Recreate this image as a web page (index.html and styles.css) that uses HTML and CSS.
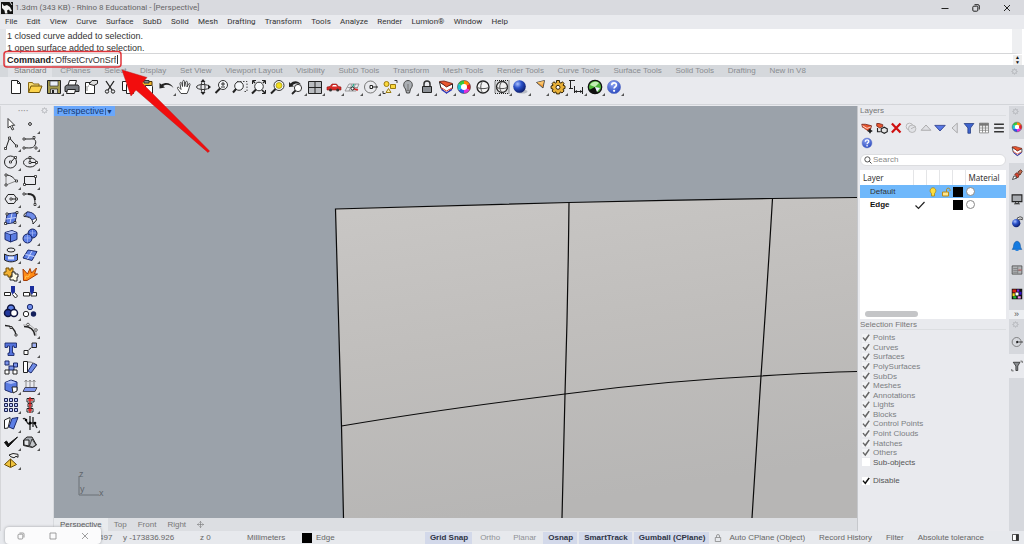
FILE: index.html
```html
<!DOCTYPE html>
<html lang="en">
<head>
<meta charset="utf-8">
<meta name="viewport" content="width=device-width, initial-scale=1">
<title>1.3dm (343 KB) - Rhino 8 Educational - [Perspective]</title>
<link rel="stylesheet" href="styles.css">
</head>
<body>
<svg class="defs" aria-hidden="true">
  <defs>
    <radialGradient id="gBlue" cx=".35" cy=".3" r=".8"><stop offset="0" stop-color="#a9c0ff"/><stop offset=".4" stop-color="#2c52c9"/><stop offset="1" stop-color="#06125a"/></radialGradient>
    <radialGradient id="gHelp" cx=".4" cy=".25" r=".9"><stop offset="0" stop-color="#8fa6f5"/><stop offset="1" stop-color="#1a3bb5"/></radialGradient>
    <linearGradient id="gSrf" x1="0" y1="0" x2=".25" y2="1"><stop offset="0" stop-color="#c9c7c5"/><stop offset=".5" stop-color="#c0bebc"/><stop offset="1" stop-color="#b7b6b5"/></linearGradient>
    <symbol id="gear" viewBox="0 0 8 8"><circle cx="4" cy="4" r="2.3" fill="none" stroke="#b4b6ba" stroke-width="1"/><path d="M4 .4v1M4 6.6v1M.4 4h1M6.6 4h1M1.4 1.4l.8.8M5.8 5.8l.8.8M6.6 1.4l-.8.8M2.2 5.8l-.8.8" stroke="#b4b6ba" stroke-width="1"/></symbol>
    <symbol id="help" viewBox="0 0 16 16"><circle cx="8" cy="8" r="6.6" fill="url(#gHelp)" stroke="#5b6fc4" stroke-width=".6"/><path d="M5.7 6.3c0-3.3 4.8-3.2 4.7-.3 0 1.7-2.3 1.8-2.3 3.5" fill="none" stroke="#fff" stroke-width="1.7"/><circle cx="8.1" cy="11.8" r="1.1" fill="#fff"/></symbol>
    <symbol id="wheel" viewBox="0 0 16 16"><g fill="none" stroke-width="4"><path d="M8 3.5A4.5 4.5 0 0 1 11.9 5.75" stroke="#ff8a00"/><path d="M11.9 5.75A4.5 4.5 0 0 1 11.9 10.25" stroke="#e8202a"/><path d="M11.9 10.25A4.5 4.5 0 0 1 8 12.5" stroke="#e32ee0"/><path d="M8 12.5A4.5 4.5 0 0 1 4.1 10.25" stroke="#2c53f0"/><path d="M4.1 10.25A4.5 4.5 0 0 1 4.1 5.75" stroke="#16c8d6"/><path d="M4.1 5.75A4.5 4.5 0 0 1 8 3.5" stroke="#35cc3a"/></g><circle cx="8" cy="8" r="3" fill="#fff"/><circle cx="8" cy="8" r="6.5" fill="none" stroke="#444" stroke-width=".6"/></symbol>
    <symbol id="layers" viewBox="0 0 16 16"><path d="M1.5 3 8.500 7.500 14.500 5v4.500L8.500 14 3 9.500z" fill="#fff" stroke="#222"/><path d="M1.500 2.500 6 2l8.500 2.500-6 3.500z" fill="#e8562e" stroke="#6b1a10" stroke-width=".8"/><path d="M3 8.500 8.500 12l5.500-3" fill="none" stroke="#d8402e"/><path d="M3.500 10.500 8.500 14l5.500-3.500" fill="none" stroke="#333bc0" stroke-width="1.200"/></symbol>
  </defs>
</svg>

<header class="titlebar">
  <svg class="app-logo" viewBox="0 0 12 12"><rect width="12" height="12" fill="#111"/><path d="M1 1.500 3 4l3-1 3 2 2 4-2 .5-1-2-2 1 .5 3H4l-.5-3L1 6z" fill="#f2f2f2"/><path d="M9 0l2 3" stroke="#ddd"/></svg>
  <h1 class="app-title">1.3dm (343 KB) - Rhino 8 Educational - [Perspective]</h1>
  <div class="window-buttons">
    <button aria-label="Minimize"><svg viewBox="0 0 8 8"><path d="M.5 4.500h7" stroke="#222"/></svg></button>
    <button aria-label="Restore"><svg viewBox="0 0 8 8"><rect x=".8" y="2.200" width="5" height="5" rx="1" fill="none" stroke="#222"/><path d="M2.500.7H6a1.300 1.300 0 0 1 1.300 1.300v3.500" fill="none" stroke="#222"/></svg></button>
    <button aria-label="Close"><svg viewBox="0 0 8 8"><path d="M1 1l6 6M7 1 1 7" stroke="#222"/></svg></button>
  </div>
</header>

<nav class="menubar">
  <button>File</button><button>Edit</button><button>View</button><button>Curve</button><button>Surface</button><button>SubD</button><button>Solid</button><button>Mesh</button><button>Drafting</button><button>Transform</button><button>Tools</button><button>Analyze</button><button>Render</button><button>Lumion®</button><button>Window</button><button>Help</button>
</nav>

<section class="command">
  <div class="history"><p>1 closed curve added to selection.</p><p>1 open surface added to selection.</p></div>
  <div class="prompt"><label for="cmd">Command:</label><input id="cmd" type="text" value="OffsetCrvOnSrf"><span class="spin"><button aria-label="Previous">▲</button><button aria-label="Next">▼</button></span></div>
</section>

<div class="tabs">
  <nav class="tab-list"><button class="on">Standard</button><button>CPlanes</button><button>Select</button><button>Display</button><button>Set View</button><button>Viewport Layout</button><button>Visibility</button><button>SubD Tools</button><button>Transform</button><button>Mesh Tools</button><button>Render Tools</button><button>Curve Tools</button><button>Surface Tools</button><button>Solid Tools</button><button>Drafting</button><button>New in V8</button></nav>
  <svg class="gear"><use href="#gear"/></svg>
</div>

<div class="toolbar">
  <button aria-label="New"><svg viewBox="0 0 16 16"><path d="M3.500 1.500h6l3 3v10h-9z" fill="#fff" stroke="#222"/><path d="M9.500 1.500v3h3" fill="none" stroke="#222"/></svg></button>
  <button aria-label="Open"><svg viewBox="0 0 16 16"><path d="M1.500 13V3.500h4l1 1.500H12v2" fill="#f7dc72" stroke="#8a6912"/><path d="M1.500 13.500 4 7h11l-2.500 6.500z" fill="#fbd24a" stroke="#6e5207"/></svg></button>
  <button class="more" aria-label="Save"><svg viewBox="0 0 16 16"><path d="M1.500 1.500h13v13h-13z" fill="#a39a4d" stroke="#222"/><path d="M4 2h8v5H4z" fill="#e8edf7" stroke="#333" stroke-width=".7"/><path d="M4.500 10h7v4.500h-7z" fill="#ddd" stroke="#222" stroke-width=".7"/><path d="M6 11h2v3H6z" fill="#222"/></svg></button>
  <button aria-label="Print"><svg viewBox="0 0 16 16"><path d="M4 6.500 5.500 1.500h7L11 6.500" fill="#fff" stroke="#222"/><path d="M1 7.500 3 6h11l1 1.500v5H1z" fill="#777b80" stroke="#222"/><path d="M3.500 10.500h8l-1 4h-8z" fill="#f7f7f7" stroke="#222"/></svg></button>
  <button aria-label="Properties"><svg viewBox="0 0 16 16"><path d="M2.500 3.500h9v11h-9z" fill="#fff" stroke="#222"/><path d="M6 5l3-3.500h5.500v3L11 6.500z" fill="#ddd" stroke="#222"/><path d="M4 7v5M5 7h1" stroke="#888"/></svg></button>
  <button aria-label="Cut"><svg viewBox="0 0 16 16"><path d="M4 2l6 9M12 2 6 11" stroke="#222" stroke-width="1.300"/><circle cx="5" cy="12.500" r="1.700" fill="none" stroke="#222"/><circle cx="11" cy="12.500" r="1.700" fill="none" stroke="#222"/></svg></button>
  <button aria-label="Copy"><svg viewBox="0 0 16 16"><path d="M2.500 2.500h6v9h-6z" fill="#fff" stroke="#222"/><path d="M6.500 5.500h5l2 2v7h-7z" fill="#fff" stroke="#222"/></svg></button>
  <button aria-label="Paste"><svg viewBox="0 0 16 16"><path d="M2 2.500h11v11H2z" fill="#f0b429" stroke="#4f3508"/><path d="M5 1.500h5v2.500H5z" fill="#888" stroke="#333"/><path d="M6.500 6.500h6l1 1v7h-7z" fill="#fff" stroke="#222"/></svg></button>
  <button class="more" aria-label="Undo"><svg viewBox="0 0 16 16"><path d="M1.500 4v5.500l5.500-1-1.800-1.400C8 5 12 5.500 15.500 9 13 3.500 7.500 2.800 3.500 5.500z" fill="#222"/></svg></button>
  <button aria-label="Pan"><svg viewBox="0 0 16 16"><path d="M5 14.500 1.500 9.500c-.5-1.500 1-1.800 2-.5L5 10.500 4 4.500c0-1.400 1.500-1.400 1.800 0L6.500 7.500l.2-5c.1-1.500 1.700-1.500 1.800 0l.2 5 1-4.500c.5-1.200 1.800-.8 1.700.4L11 8l1.500-3c.7-1 1.800-.5 1.500.6L12.500 11 11 14.500z" fill="#fff" stroke="#333" stroke-width=".9"/></svg></button>
  <button aria-label="Rotate view"><svg viewBox="0 0 16 16"><g fill="none" stroke="#333"><ellipse cx="8" cy="8" rx="6.500" ry="2.500"/><ellipse cx="8" cy="8" rx="2" ry="6"/></g><path d="M5.500 3 8 0l2.500 3zM5.500 13 8 16l2.500-3zM13 5.500l3 2.500-3 2.500z" fill="#222"/></svg></button>
  <button aria-label="Zoom"><svg viewBox="0 0 16 16"><circle cx="9" cy="6" r="4.500" fill="#f6f8fb" stroke="#333"/><path d="M6 9.500 1.500 14" stroke="#222" stroke-width="2"/><path d="M7 5h4M9 3v4M7 8h4" stroke="#333"/></svg></button>
  <button aria-label="Zoom window"><svg viewBox="0 0 16 16"><path d="M5 2.500h10v10h-4" fill="none" stroke="#444" stroke-dasharray="1.500 1.500"/><circle cx="7" cy="7" r="4.300" fill="#f6f8fb" stroke="#333"/><path d="M4 10 1 13.500" stroke="#222" stroke-width="2"/></svg></button>
  <button aria-label="Zoom extents"><svg viewBox="0 0 16 16"><path d="M1.500 5V1.500H5M11 1.500h3.500V5M14.500 11v3.500H11" fill="none" stroke="#222"/><path d="M2 2l2 2M14 2l-2 2M14 14l-3-3" stroke="#222" stroke-width="1.500"/><circle cx="8" cy="7.500" r="4.300" fill="#f6f8fb" stroke="#333"/><path d="M5 10.500 1 14.500" stroke="#222" stroke-width="2"/></svg></button>
  <button aria-label="Zoom selected"><svg viewBox="0 0 16 16"><circle cx="9" cy="6.500" r="5" fill="#f6f8fb" stroke="#333"/><circle cx="9" cy="6.500" r="3" fill="#f3df1b" stroke="#8a7d10" stroke-width=".6"/><path d="M5.500 10 1 14.500" stroke="#222" stroke-width="2"/></svg></button>
  <button class="more" aria-label="Undo view"><svg viewBox="0 0 16 16"><path d="M1 3v5l5-.5-1.500-1.400C7 4 10 4 13 5.500 10 1.500 5.500 1.500 2.700 4.500z" fill="#222"/><circle cx="10" cy="9" r="3.600" fill="#fff" stroke="#333"/><path d="M7.500 11.500 4 15" stroke="#222" stroke-width="1.800"/></svg></button>
  <button class="more" aria-label="Four viewports"><svg viewBox="0 0 16 16"><path d="M1.500 2.500h13v12h-13z" fill="#b9bcc0" stroke="#222"/><path d="M8 2.500v12M1.500 8.500h13" stroke="#222"/></svg></button>
  <button class="more" aria-label="Car view"><svg viewBox="0 0 16 16"><path d="M1 11V8l3-.5L6 5h4.500l2 2.500 2.500.5v3z" fill="#d92c28" stroke="#8c1512" stroke-width=".6"/><path d="M6 7.500 7 6h3l1 1.500z" fill="#fff"/><circle cx="4.500" cy="11" r="1.500" fill="#333"/><circle cx="11.700" cy="11" r="1.500" fill="#333"/></svg></button>
  <button class="more" aria-label="CPlane"><svg viewBox="0 0 16 16"><path d="M5 5h10l-3 7H1zM3.500 8.500h10.500M8 5l-3 7M11.500 5 8.500 12" fill="none" stroke="#888" stroke-width=".8"/><path d="M9 9.500l5 1.500" stroke="#d22" stroke-width="1.500"/><path d="M8 9l2-4" stroke="#2a8" stroke-width="1.200"/><circle cx="8.500" cy="9.500" r="1.500" fill="#fff" stroke="#222"/></svg></button>
  <button class="more" aria-label="Object snap"><svg viewBox="0 0 16 16"><circle cx="7.500" cy="8" r="6" fill="none" stroke="#777"/><path d="M7 6.500h2.500v3H7z" fill="#fff" stroke="#222"/><path d="M9.500 8H15" stroke="#222"/></svg></button>
  <button class="more" aria-label="Select"><svg viewBox="0 0 16 16"><circle cx="4.500" cy="5" r="2.500" fill="#fbd83c" stroke="#9a7a10"/><path d="M8.500 5.500h5v4h-5z" fill="#fbd83c" stroke="#9a7a10"/><path d="M4 13.500 6.500 9.500 9 13.500z" fill="#fff3b0" stroke="#9a7a10"/><path d="M12.500 1.500h2.500V4M1 12v2.500h2.500" fill="none" stroke="#333"/></svg></button>
  <button class="more" aria-label="Hide"><svg viewBox="0 0 16 16"><path d="M5.500 10C2 6.500 4 1.500 8 1.500S14 6.500 10.500 10L9.500 14h-3z" fill="#aaaeb3" stroke="#444"/><path d="M6 11.500h4M8 5v6" stroke="#777"/></svg></button>
  <button class="more" aria-label="Lock"><svg viewBox="0 0 16 16"><path d="M5 7.500V5a3 3 0 0 1 6 0v2.500" fill="none" stroke="#333" stroke-width="1.500"/><path d="M3.500 7.500h9v6h-9z" fill="#8c9096" stroke="#222"/></svg></button>
  <button class="more" aria-label="Layers"><svg><use href="#layers"/></svg></button>
  <button class="more" aria-label="Color"><svg><use href="#wheel"/></svg></button>
  <button aria-label="Shade"><svg viewBox="0 0 16 16"><circle cx="8" cy="8" r="6" fill="#f4f4f4" stroke="#222" stroke-width="1.300"/><path d="M8 2c-3 3-3 9 0 12M2 8.500c4 1.500 8 1.500 12 0" fill="none" stroke="#555"/></svg></button>
  <button class="more" aria-label="Shade selected"><svg viewBox="0 0 16 16"><path d="M1 1.500h14v13H1z" fill="#d8dadd" stroke="#222" stroke-dasharray="1 1"/><circle cx="8" cy="8" r="5.500" fill="#eee" stroke="#222" stroke-width="1.300"/><path d="M8 2.500c-3 3-3 8 0 11M2.500 8.500c4 1.500 7 1.500 11 0" fill="none" stroke="#555"/></svg></button>
  <button class="more" aria-label="Render"><svg viewBox="0 0 16 16"><ellipse cx="10" cy="12.500" rx="5.500" ry="2" fill="#b8bcc4"/><circle cx="7.500" cy="7.500" r="6.300" fill="url(#gBlue)"/></svg></button>
  <button class="more" aria-label="Spotlight"><svg viewBox="0 0 16 16"><path d="M5.500 3.500 13.500 1.500 12 9z" fill="#ef9b35" stroke="#444" stroke-width=".9"/><path d="M6 3.500 13 2l-1.500 4z" fill="#fbc56b"/></svg></button>
  <button class="more" aria-label="Options"><svg viewBox="0 0 16 16"><path d="M6.500 1.500h3v2l1.500.6 1.500-1.300 1.500 1.800-1 1.600 2 .8v2.500l-2 .6 1 2-2 1.800-1.800-1-.7 2h-3l-.6-2-1.800 1-2-1.800 1-2-2-.6V7l2-.8-1-1.600 1.700-1.800L5.500 4l1-.5z" fill="#e8b13a" stroke="#332405"/><circle cx="8" cy="8.300" r="2" fill="#fff" stroke="#332405"/></svg></button>
  <button class="more" aria-label="Dimension"><svg viewBox="0 0 16 16"><path d="M1 1.500h6M2.500 1.500v8M1 9.500h4M6.500 7v7M14.500 8v7M6.500 12.500h8" fill="none" stroke="#222"/><path d="M9 11l-2.500 1.500L9 14zM12 11l2.500 1.500L12 14z" fill="#222"/></svg></button>
  <button class="more" aria-label="Grasshopper"><svg viewBox="0 0 16 16"><circle cx="8" cy="8" r="6.700" fill="#4fb53a" stroke="#111" stroke-width="1.300"/><path d="M8 8 2 11a7 7 0 0 0 9 3z" fill="#111"/><path d="M3 6c2-4 7-4 9-2L8 8z" fill="#c4eeb4"/><path d="M8 8l5 1-3 4z" fill="#eef"/></svg></button>
  <button class="more" aria-label="Help"><svg><use href="#help"/></svg></button>
</div>

<main class="work">
  <aside class="palette">
    <div class="grip"><span>····</span><svg class="gear"><use href="#gear"/></svg></div>
    <div class="tools">
      <button aria-label="Select"><svg viewBox="0 0 16 16"><path d="M5 2.500v9.500l2.200-2 2 4 1.500-.7-2-4h3z" fill="#fff" stroke="#222" stroke-width=".9"/></svg></button>
      <button class="more" aria-label="Point"><svg viewBox="0 0 16 16"><circle cx="8" cy="8" r="1.400" fill="#fff" stroke="#222"/></svg></button>
      <button class="more" aria-label="Polyline"><svg viewBox="0 0 16 16"><path d="M3 13 6.500 3l7 8" fill="none" stroke="#222"/><path d="M1.500 12.500h2v2h-2zM5.500 2h2v2h-2zM12.500 10h2v2h-2z" fill="#fff" stroke="#222" stroke-width=".8"/></svg></button>
      <button class="more" aria-label="Curve"><svg viewBox="0 0 16 16"><path d="M2 4h6c6-1 7 3 4.500 7C10 14 6 12.500 2 13" fill="none" stroke="#222"/><path d="M1 3h2v2H1zM11 1.500h2v2h-2zM1 12h2v2H1zM13 12h2v2h-2z" fill="#fff" stroke="#222" stroke-width=".8"/></svg></button>
      <button class="more" aria-label="Circle"><svg viewBox="0 0 16 16"><circle cx="7.500" cy="8" r="6" fill="none" stroke="#222"/><path d="M8 8l4-4.500" stroke="#222"/><path d="M6.500 7h2v2h-2zM11.500 2.500h2v2h-2z" fill="#fff" stroke="#222" stroke-width=".8"/></svg></button>
      <button class="more" aria-label="Ellipse"><svg viewBox="0 0 16 16"><ellipse cx="8" cy="8.500" rx="6.500" ry="4.500" fill="none" stroke="#222"/><path d="M8 8V3.500M8 8.500h6" stroke="#222"/><path d="M7 7.500h2v2H7zM7 2.500h2v2H7zM13.500 7.500h2v2h-2z" fill="#fff" stroke="#222" stroke-width=".8"/></svg></button>
      <button class="more" aria-label="Arc"><svg viewBox="0 0 16 16"><path d="M3 3c5 0 8 3 10 6" fill="none" stroke="#222"/><path d="M3 3v10l10-4" fill="none" stroke="#888"/><path d="M2 2h2v2H2zM2 12h2v2H2zM12.500 8h2v2h-2z" fill="#fff" stroke="#222" stroke-width=".8"/></svg></button>
      <button class="more" aria-label="Rectangle"><svg viewBox="0 0 16 16"><path d="M2.500 4.500h11v8h-11z" fill="none" stroke="#222"/><path d="M1.500 11.500h2v2h-2zM12.500 3.500h2v2h-2z" fill="#fff" stroke="#222" stroke-width=".8"/></svg></button>
      <button class="more" aria-label="Polygon"><svg viewBox="0 0 16 16"><path d="M5 3.500h6L14 8l-3 4.500H5L2 8z" fill="none" stroke="#222"/><path d="M8 8h5" stroke="#222"/><path d="M7 7h2v2H7zM12.500 7h2v2h-2z" fill="#fff" stroke="#222" stroke-width=".8"/></svg></button>
      <button class="more" aria-label="Fillet"><svg viewBox="0 0 16 16"><path d="M2 3h5c5 0 6 3 6 11" fill="none" stroke="#222"/><path d="M6 3c5 0 7 2 7 6" fill="none" stroke="#222" stroke-width="2"/><path d="M1 2h2v2H1zM12 12.500h2v2h-2z" fill="#fff" stroke="#222" stroke-width=".8"/></svg></button>
      <button class="more" aria-label="Corner surface"><svg viewBox="0 0 16 16"><path d="M4 4l10-1.500-2 10L2.500 14z" fill="#5d7de0" stroke="#1c2a6b"/><path d="M9 3.500 7 13M3 9l10-1.500" stroke="#cbd6ff"/><path d="M3 3h2v2H3zM13 1.500h2v2h-2zM11 11.500h2v2h-2zM1.500 12.500h2v2h-2z" fill="#fff" stroke="#222" stroke-width=".8"/></svg></button>
      <button class="more" aria-label="Sweep surface"><svg viewBox="0 0 16 16"><path d="M2 4.500 5 2c5 0 9 3 9.500 8L11 14C11 9.500 8 6.500 2 6.500z" fill="#fff" stroke="#222"/><path d="M5 2c5 0 8 2 9 6l-4 2C9 7.500 7 6.500 3.500 6z" fill="#6f8ce8" stroke="#1c2a6b" stroke-width=".8"/></svg></button>
      <button class="more" aria-label="Box"><svg viewBox="0 0 16 16"><path d="M2 4.500 9 2.500l5 2v7L7.500 14 2 11.500z" fill="#5b7ce2" stroke="#1c2a6b"/><path d="M2 4.500l5.500 2 6.500-2M7.500 6.500V14" fill="none" stroke="#1c2a6b"/><path d="M2.500 4.500 9 3l4.500 1.500-6 1.700z" fill="#aebff8"/></svg></button>
      <button class="more" aria-label="Spheres"><svg viewBox="0 0 16 16"><circle cx="10.500" cy="5.500" r="4.500" fill="#4c6ed8" stroke="#14205c"/><circle cx="5.500" cy="10.500" r="4.500" fill="#5d7fe5" stroke="#14205c"/><path d="M2 10h7M5.500 6.500v8M8 5h6M10.500 2v6" stroke="#9fb2f5" stroke-width=".8"/></svg></button>
      <button class="more" aria-label="Extract curves"><svg viewBox="0 0 16 16"><ellipse cx="8" cy="3" rx="4" ry="2" fill="none" stroke="#222"/><path d="M1.500 7c4 2.500 9 2.500 13 0v6c-4 2.500-9 2.500-13 0z" fill="#5d7fe5" stroke="#222"/><path d="M5 9.500h6v3H5z" fill="#dfe7ff"/></svg></button>
      <button class="more" aria-label="Plane surface"><svg viewBox="0 0 16 16"><path d="M6 3l9 1.500-5 9L1 11z" fill="#5d7fe5" stroke="#1c2a6b"/><path d="M10 4 5.500 12M3.500 7.500l9 2" stroke="#cbd6ff"/></svg></button>
      <button class="more" aria-label="Boolean"><svg viewBox="0 0 16 16"><path d="M3 2h3v2h2V2h2v4h1v3H8v2H5V9H1V6h2z" fill="#f4b233" stroke="#6e4c07"/><path d="M9 6h3v2h3v3h-1v4h-3v-1H7v-3h2z" fill="#fffbe5" stroke="#222"/></svg></button>
      <button aria-label="Explode"><svg viewBox="0 0 16 16"><path d="M1 3l4.500 5L8 2.500 9.500 7 14.500 2 12.500 8H15.500L5 14.500H1.500z" fill="#ff8a14" stroke="#a63c04"/><path d="M3 13 4 10l2 1 2-3" fill="none" stroke="#ffc04a"/></svg></button>
      <button aria-label="Trim"><svg viewBox="0 0 16 16"><path d="M1.500 8.500h6v3h-6z" fill="#fff" stroke="#222"/><path d="M8 2h4v6l-2 3-2-3z" fill="#1b2e9c"/><path d="M9.500 10.500l3 3.500 2-2-3-3.500" fill="#fff" stroke="#222"/></svg></button>
      <button aria-label="Split"><svg viewBox="0 0 16 16"><path d="M1.500 8.500h6v3.500h-6zM9 8.500h5.500V12H9z" fill="#fff" stroke="#222"/><path d="M8 2h4v5l-2 4-2-3z" fill="#1b2e9c"/></svg></button>
      <button class="more" aria-label="Group"><svg viewBox="0 0 16 16"><circle cx="8" cy="5.500" r="3.500" fill="#5d7fe5" stroke="#0e1440" stroke-width="1.500"/><circle cx="5" cy="10" r="3.500" fill="#22389e" stroke="#0e1440" stroke-width="1.500"/><circle cx="11" cy="10" r="3.500" fill="#fff" stroke="#0e1440" stroke-width="1.500"/></svg></button>
      <button aria-label="Ungroup"><svg viewBox="0 0 16 16"><circle cx="8" cy="4" r="2.700" fill="#6f8ce8" stroke="#1c2a6b"/><circle cx="4" cy="11" r="2.700" fill="#fff" stroke="#222"/><circle cx="11.500" cy="11" r="2.700" fill="#14205c"/></svg></button>
      <button aria-label="Extend"><svg viewBox="0 0 16 16"><path d="M2 3.500c6 0 10 3 11 10" fill="none" stroke="#222" stroke-width="1.300"/><path d="M7 4.500h2v2H7zM12 12h2v2h-2z" fill="#fff" stroke="#222" stroke-width=".8"/></svg></button>
      <button class="more" aria-label="Points on"><svg viewBox="0 0 16 16"><path d="M2 4.500c6 0 10 3 11 9" fill="none" stroke="#222" stroke-width="1.600"/><path d="M1 3h7l6 5v6" fill="none" stroke="#999" stroke-width=".8"/><circle cx="6" cy="2.500" r="1.300" fill="#fff" stroke="#222" stroke-width=".7"/><circle cx="14" cy="8" r="1.300" fill="#fff" stroke="#222" stroke-width=".7"/></svg></button>
      <button aria-label="Text"><svg viewBox="0 0 16 16"><path d="M2 2h11.500v4.500H11V5H9.500v7H11v2.500H5V12h1.500V5H4.500v1.500H2z" fill="#5573dc" stroke="#1c2a6b" stroke-width=".9"/></svg></button>
      <button class="more" aria-label="Move"><svg viewBox="0 0 16 16"><path d="M2 9.500h4v4H2z" fill="#fff" stroke="#222"/><path d="M10 2h4.500v4.500H10z" fill="#9fb0f3" stroke="#222"/><path d="M6.500 9 9.500 6.500" stroke="#222"/></svg></button>
      <button aria-label="Copy objects"><svg viewBox="0 0 16 16"><path d="M2 2h4v4H2zM6 7h5v4H6zM10.500 4h4v4h-4z" fill="#7d95ec" stroke="#1c2a6b"/><path d="M2 11h4v4H2zM10 11h4v4h-4z" fill="#fff" stroke="#222"/></svg></button>
      <button aria-label="Rotate"><svg viewBox="0 0 16 16"><path d="M1.500 2.500h4v11h-4z" fill="#fff" stroke="#222"/><path d="M11 4l4 2-6 8-3-2z" fill="#6f8ce8" stroke="#1c2a6b"/><path d="M6 3c3 0 4 0 6 2" fill="none" stroke="#777"/></svg></button>
      <button class="more" aria-label="Edit solid"><svg viewBox="0 0 16 16"><path d="M2 4.500 8 2l6 2v8l-5.500 2.500L2 12z" fill="#5b7ce2" stroke="#1c2a6b"/><path d="M2.500 4.500 8 2.500l5 2-5 1.500z" fill="#aebff8"/><path d="M9 9h5v4l-4 2z" fill="#fff" stroke="#222"/></svg></button>
      <button class="more" aria-label="Project"><svg viewBox="0 0 16 16"><path d="M4 9V2M8 9V2M12 9V2M2.500 4 4 2l1.500 2M6.500 4 8 2l1.500 2M10.500 4 12 2l1.500 2" fill="none" stroke="#777" stroke-width=".8"/><path d="M3 9.500h12l-2 4H1z" fill="#7d95ec" stroke="#445"/></svg></button>
      <button class="more" aria-label="Array"><svg viewBox="0 0 16 16"><path d="M1.500 1.500h3v3h-3zM6.500 1.500h3v3h-3zM11.500 1.500h3v3h-3zM1.500 6.500h3v3h-3zM6.500 6.500h3v3h-3zM11.500 6.500h3v3h-3zM1.500 11.500h3v3h-3zM6.500 11.500h3v3h-3zM11.500 11.500h3v3h-3z" fill="#b9c6fa" stroke="#1c2350"/></svg></button>
      <button class="more" aria-label="Align"><svg viewBox="0 0 16 16"><path d="M5 1.500h7V5H5zM6 6.500h4V10H6zM5 11.500h6V15H5z" fill="#fff" stroke="#222"/><path d="M8 0v16M6 3h5M6.500 8h3M6 13h4" stroke="#d21f1f" stroke-width="1.300"/></svg></button>
      <button class="more" aria-label="Mirror"><svg viewBox="0 0 16 16"><path d="M1.500 5 7 2.500v2L5 13l-3.500.5z" fill="#fff" stroke="#222"/><path d="M9 3.500l6-1-4.500 11.500L6 12z" fill="#5d7fe5" stroke="#1c2a6b"/></svg></button>
      <button class="more" aria-label="Edit points"><svg viewBox="0 0 16 16"><path d="M1 4c3-3 3 5 6 5s4-5 8 4M8 1v14M11 2v10" fill="none" stroke="#222" stroke-width="1.300"/><circle cx="4" cy="5" r="1.300"/><circle cx="8" cy="8" r="1.500"/><circle cx="13" cy="8" r="1.300"/></svg></button>
      <button class="more" aria-label="Check"><svg viewBox="0 0 16 16"><path d="M1.500 8.500 5 13l9.500-10L5.500 10 3.500 7z" fill="#111" stroke="#111"/></svg></button>
      <button class="more" aria-label="Mesh"><svg viewBox="0 0 16 16"><path d="M1.500 6 5 3h5l4.500 8-4 2.500-9-2z" fill="#a9adb3" stroke="#222"/><path d="M2 6h5v6L2 11z" fill="#e3e5e8" stroke="#222"/><path d="M7.500 12 10 5l4 6-3.500 2z" fill="#c5c8cc" stroke="#222" stroke-width=".8"/></svg></button>
      <button class="more" aria-label="Gumball"><svg viewBox="0 0 16 16"><path d="M1.500 11.500 7.500 6l6 5.500-6 3z" fill="#efc23d" stroke="#6b4e05"/><path d="M7.500 6v8" stroke="#6b4e05"/><path d="M6 2l4-1.500 5 .8v3l-2-1-2 1.500-3-1z" fill="#eee" stroke="#222"/></svg></button>
    </div>
  </aside>

  <section class="view">
    <div class="viewport">
      <svg class="scene" viewBox="54 106 803 412" preserveAspectRatio="xMinYMin slice">
        <path d="M335.500 209Q450 205 569 202.500T772 198.500L857 197.500V518H343.500Q342 470 341.500 426z" fill="url(#gSrf)"/>
        <g fill="none" stroke="#0a0a0a" stroke-width="1.200">
          <path d="M857 197.500 772 198.500Q670 200 569 202.500T335.500 209Q339 320 341.500 426L343.500 518"/>
          <path d="M569 202.500Q568 300 565 394L562 518M772.500 198.500Q767 290 761 376L752 518"/>
          <path d="M341.500 426C430 411 500 402 565 394C640 384 700 379 761 376C800 373.500 830 372 857 371.500"/>
        </g>
        <g class="axes"><path d="M79 476v19h20" fill="none" stroke="#6b7077"/><text x="79" y="477">z</text><text x="80" y="492">y</text><text x="99" y="496">x</text></g>
      </svg>
      <button class="view-title">Perspective<span>▼</span></button>
    </div>
    <nav class="view-tabs"><button class="on">Perspective</button><button>Top</button><button>Front</button><button>Right</button><button aria-label="Add viewport"><svg viewBox="0 0 8 8"><path d="M4 .5v7M.5 4h7M2.800 1.800 4 .5l1.200 1.300M2.800 6.200 4 7.500l1.200-1.300M1.800 2.800.5 4l1.300 1.200M6.200 2.800 7.500 4 6.200 5.200" fill="none" stroke="#777" stroke-width=".7"/></svg></button></nav>
  </section>

  <aside class="panels">
    <section class="layers">
      <h2 class="panel-head">Layers</h2>
      <div class="layer-tools">
        <button aria-label="New layer"><svg viewBox="0 0 16 16"><path d="M1 3h5l8 2-1 4-5 2.500L2 7z" fill="#e8562e" stroke="#6b1a10"/><path d="M2 5l6 3.500 5-2M2.500 8 8 12" fill="none" stroke="#fff"/><path d="M12 9v6M9 12h6" stroke="#111" stroke-width="2"/></svg></button>
        <button aria-label="New sublayer"><svg viewBox="0 0 16 16"><path d="M1 2h3l5 1.500V6L5 8 1 5.500z" fill="#e8562e" stroke="#6b1a10"/><path d="M2 8v5h4M7 9l4-2 4 2v4l-4 2-4-2z" fill="#e4e4e4" stroke="#222" stroke-width="1.500"/></svg></button>
        <button aria-label="Delete"><svg viewBox="0 0 16 16"><path d="M2.500 2l11.500 12M14 2 2.500 14" stroke="#cf1010" stroke-width="3"/></svg></button>
        <button aria-label="Match"><svg viewBox="0 0 16 16"><circle cx="6" cy="6" r="4.500" fill="none" stroke="#aaa"/><circle cx="9.500" cy="9" r="5" fill="#e1e2e6" stroke="#aaa"/><path d="M8 9l6-3" stroke="#aaa"/></svg></button>
        <button aria-label="Up"><svg viewBox="0 0 16 16"><path d="M1.500 11 8 4l6.500 7z" fill="#dfe0e4" stroke="#999"/></svg></button>
        <button aria-label="Down"><svg viewBox="0 0 16 16"><path d="M1 4.500h14L8 12z" fill="#5878e4" stroke="#1d2f80"/></svg></button>
        <button aria-label="Left"><svg viewBox="0 0 16 16"><path d="M11 1.500v13L4 8z" fill="#dfe0e4" stroke="#999"/></svg></button>
        <button aria-label="Filter"><svg viewBox="0 0 16 16"><path d="M1.500 2h13L10 8v7H6.500V8z" fill="#3e64ce" stroke="#22397f"/></svg></button>
        <button aria-label="Columns"><svg viewBox="0 0 16 16"><path d="M2 1.500h12v13H2zM2 5h12M2 8h12M2 11h12M6 2v12M10 2v12" fill="#fff" stroke="#777"/><path d="M2 1.500h12v3H2z" fill="#777"/></svg></button>
        <button aria-label="Menu"><svg viewBox="0 0 16 16"><path d="M1.500 3h13M1.500 8h13M1.500 13h13" stroke="#333" stroke-width="2.200"/></svg></button>
        <button aria-label="Help"><svg><use href="#help"/></svg></button>
      </div>
      <label class="search"><svg viewBox="0 0 8 8"><circle cx="3.400" cy="3.400" r="2.600" fill="none" stroke="#444" stroke-width=".9"/><path d="M5.300 5.300 7.500 7.500" stroke="#444"/></svg><input type="text" placeholder="Search" aria-label="Search"></label>
      <div class="layer-list">
        <table>
          <colgroup><col class="c-name"><col class="c-ic"><col class="c-ic"><col class="c-ic"><col class="c-ic"><col></colgroup>
          <thead><tr><th>Layer</th><th></th><th></th><th></th><th></th><th>Material</th></tr></thead>
          <tbody>
            <tr class="sel"><td>Default</td><td></td><td><svg viewBox="0 0 10 10"><path d="M3.500 6.500C.8 4 2.500.8 5 .8s4.200 3.200 1.500 5.700V9h-3z" fill="#ffdf3d" stroke="#a98612" stroke-width=".8"/></svg></td><td><svg viewBox="0 0 10 10"><path d="M5.500 5V2.500a1.800 1.800 0 0 1 3.500 0V4" fill="none" stroke="#b48a1c"/><path d="M1.500 5h6v4h-6z" fill="#ffe58a" stroke="#b48a1c"/></svg></td><td><i class="swatch"></i></td><td><i class="dot"></i></td></tr>
            <tr class="cur"><td>Edge</td><td><svg viewBox="0 0 10 10"><path d="M.5 5.500 3.500 8.500 9.500 2" fill="none" stroke="#222" stroke-width="1.200"/></svg></td><td></td><td></td><td><i class="swatch"></i></td><td><i class="dot"></i></td></tr>
          </tbody>
        </table>
        <div class="thumb"></div>
      </div>
    </section>
    <section class="filters">
      <h2 class="panel-head">Selection Filters</h2>
      <div class="checks">
        <label><input type="checkbox" checked>Points</label>
        <label><input type="checkbox" checked>Curves</label>
        <label><input type="checkbox" checked>Surfaces</label>
        <label><input type="checkbox" checked>PolySurfaces</label>
        <label><input type="checkbox" checked>SubDs</label>
        <label><input type="checkbox" checked>Meshes</label>
        <label><input type="checkbox" checked>Annotations</label>
        <label><input type="checkbox" checked>Lights</label>
        <label><input type="checkbox" checked>Blocks</label>
        <label><input type="checkbox" checked>Control Points</label>
        <label><input type="checkbox" checked>Point Clouds</label>
        <label><input type="checkbox" checked>Hatches</label>
        <label><input type="checkbox" checked>Others</label>
        <label class="dark"><input type="checkbox">Sub-objects</label>
        <label class="dark"><input type="checkbox" checked>Disable</label>
      </div>
    </section>
  </aside>

  <nav class="rail">
    <div class="rail-top">
      <svg class="gear"><use href="#gear"/></svg>
      <button aria-label="Properties"><svg><use href="#wheel"/></svg></button>
      <button class="on" aria-label="Layers"><svg><use href="#layers"/></svg></button>
      <button aria-label="Rendering"><svg viewBox="0 0 16 16"><path d="M2 14l2-5 4 3z" fill="#fff" stroke="#222"/><path d="M5 7 8 5l3 3-2 4z" fill="#d8402e" stroke="#621"/><path d="M9 4l4-3 2 2-3 5z" fill="#c96a50" stroke="#421"/></svg></button>
      <button aria-label="Display"><svg viewBox="0 0 16 16"><path d="M1.500 2.500h13v9h-13z" fill="#a8abb0" stroke="#222" stroke-width="1.500"/><path d="M6 12v2h4v-2M4 14.500h8" stroke="#222" fill="none"/></svg></button>
      <button aria-label="Materials"><svg viewBox="0 0 16 16"><circle cx="7" cy="9.500" r="5.500" fill="url(#gBlue)"/><path d="M8 3l4-2 3 1v3l-3-1-2 1z" fill="#eee" stroke="#222"/></svg></button>
      <button aria-label="Notifications"><svg viewBox="0 0 16 16"><path d="M1.500 12.500C4 10.500 3 6 4.500 4c2-3 5-3 7 0C13 6 12 10.500 14.500 12.500z" fill="#167be0" stroke="#0c4f9b" stroke-width=".7"/><path d="M6 13.500h4" stroke="#167be0" stroke-width="2"/></svg></button>
      <button aria-label="Calculator"><svg viewBox="0 0 16 16"><path d="M1.500 2.500h13v11h-13z" fill="#b2b4b6" stroke="#444"/><path d="M3 6h6M3 8.500h10M3 11h6M9 3v10" stroke="#777"/><path d="M10 8h4" stroke="#c44"/></svg></button>
      <button aria-label="Swatches"><svg viewBox="0 0 16 16"><path d="M1 1h14v14H1z" fill="#111"/><path d="M2 2h5v4H2z" fill="#d21"/><path d="M8 2h3v3H8z" fill="#7a2ad8"/><path d="M11 5h3v4h-3z" fill="#31c"/><path d="M2 7h3v4H2z" fill="#f0d818"/><path d="M6 6h4v4H6z" fill="#fff"/><path d="M3 11h4v3H3z" fill="#2b3"/><path d="M9 11h4v3H9z" fill="#e8e"/></svg></button>
      <button class="chev" aria-label="More panels">»</button>
    </div>
    <div class="rail-bottom">
      <svg class="gear"><use href="#gear"/></svg>
      <button aria-label="Osnap"><svg viewBox="0 0 16 16"><circle cx="7.500" cy="8" r="6" fill="none" stroke="#666"/><path d="M7 6.500h2.500v3H7z" fill="#222"/><path d="M9.500 8H16" stroke="#222"/></svg></button>
      <button class="on" aria-label="Selection filter"><svg viewBox="0 0 16 16"><path d="M3 3h9L9 8v6H6.500V8z" fill="#8a8d91" stroke="#222"/><path d="M12.500 1.500h2.500V4M1 12v2.500h2.500" fill="none" stroke="#444"/></svg></button>
    </div>
  </nav>
</main>

<footer class="status">
  <div class="coords"><span class="cx">497</span><span class="cy">y -173836.926</span><span class="cz">z 0</span><span class="units">Millimeters</span><i class="swatch"></i><span>Edge</span></div>
  <div class="modes">
    <button class="on">Grid Snap</button><button class="off">Ortho</button><button class="off">Planar</button><button class="on">Osnap</button><button class="on">SmartTrack</button><button class="on">Gumball (CPlane)</button>
    <svg class="lock" viewBox="0 0 8 8"><path d="M2.500 3.500V2a1.500 1.500 0 0 1 3 0v1.500M1.300 3.500h5.400v4H1.300z" fill="none" stroke="#888" stroke-width=".8"/></svg>
    <button>Auto CPlane (Object)</button><button>Record History</button><button>Filter</button><button>Absolute tolerance</button>
    <svg class="side" viewBox="0 0 8 8"><path d="M.5.5h7v7h-7z" fill="#fff" stroke="#333"/><path d="M4.500.5h3v7h-3z" fill="#333"/></svg>
  </div>
</footer>

<div class="mini">
  <button aria-label="Restore"><svg viewBox="0 0 8 8"><rect x="1" y="2.200" width="4.800" height="4.800" rx="1" fill="none" stroke="#888" stroke-width=".8"/><path d="M2.500 1H6a1 1 0 0 1 1 1v3.500" fill="none" stroke="#888" stroke-width=".8"/></svg></button>
  <button aria-label="Maximize"><svg viewBox="0 0 8 8"><path d="M1 1h6v6H1z" fill="none" stroke="#888" stroke-width=".8"/></svg></button>
  <button aria-label="Close"><svg viewBox="0 0 8 8"><path d="M1 1l6 6M7 1 1 7" stroke="#888" stroke-width=".8"/></svg></button>
</div>

<svg class="callout" viewBox="0 0 212 156" aria-hidden="true"><rect x="4" y="51.500" width="117" height="15.500" rx="3" fill="none" stroke="#e0353b" stroke-width="1.500"/><path d="M122 70l25 7.500-5 5.500L209.500 151l-1.500 1.500L136 90l-5 6z" fill="#f20d0d" stroke="#c01515" stroke-width=".5"/></svg>
</body>
</html>
```
FILE: styles.css
```css
* { box-sizing: border-box; }
html { height: 100%; }
body { margin: 0; min-height: 100%; display: flex; flex-direction: column; position: relative; overflow: hidden; background: #e9eaee; color: #555; font: 8px/10px "Liberation Sans", Arial, sans-serif; }
h1, h2, p { margin: 0; font-size: inherit; font-weight: normal; }
button { margin: 0; padding: 0; border: 0; background: none; color: inherit; font: inherit; white-space: nowrap; }
input { font: inherit; color: inherit; }
svg { display: block; flex: none; }
.defs { position: absolute; width: 0; height: 0; }
.gear { width: 8px; height: 8px; }

.titlebar { display: flex; align-items: center; height: 15px; padding-left: 1px; background: #d9dadf; font-family: Roboto, sans-serif; }
.app-logo { width: 12px; height: 12px; }
.app-title { flex: 1; padding-left: 2px; color: #666; }
.window-buttons { display: flex; gap: 23px; padding-right: 13px; }
.window-buttons svg { width: 8px; height: 8px; }

.menubar { display: flex; justify-content: space-between; max-width: 508px; height: 14px; padding-left: 5px; align-items: center; color: #333; font-family: Roboto, sans-serif; }

.command { display: flex; flex-direction: column; padding: 0 2px 0 6px; color: #333; font-size: 9px; background: linear-gradient(90deg, #e2e4e8 6px, #fff 6px); }
.history { height: 25px; overflow: hidden; border-right: 10px solid #eeeff1; border-bottom: 1px solid #d5d6d8; line-height: 12px; padding: 1px 1px 0; }
.prompt { display: flex; align-items: center; height: 11px; padding-left: 1px; }
.prompt label { font-weight: bold; color: #222; }
.prompt input { width: 64px; height: 9px; border: 0; border-right: 1px solid #333; outline: 0; padding: 0 1px; background: none; }
.spin { display: flex; flex-direction: column; width: 9px; margin-left: auto; background: #eee; }
.spin button { height: 5px; font-size: 5px; line-height: 5px; color: #111; }

.tabs { display: flex; align-items: center; justify-content: space-between; height: 12px; padding: 0 6px 0 8px; background: #d5d8dc; color: #8a8d91; }
.tab-list { flex: 0 1 804px; display: flex; justify-content: space-between; }
.tabs button { padding: 0 6px; height: 12px; }
.tabs .on { background: #e0e2e6; color: #777; }
.tabs .gear { width: 7px; height: 7px; }

.toolbar { display: grid; grid-template-columns: repeat(33, 1fr); width: 616px; height: 27px; margin-left: 7px; padding-bottom: 8px; }
.toolbar button, .tools button { display: grid; place-items: center; position: relative; }
.toolbar svg, .tools svg { width: 16px; height: 16px; }
.more::after { content: ""; position: absolute; right: -1px; bottom: 0; border-style: solid; border-width: 0 0 3px 3px; border-color: transparent transparent #555; }

.work { flex: 1; display: grid; grid-template-columns: 54px 1fr 152px 15px; border-top: 1px solid #d3d5d9; padding-top: 1px; min-height: 0; }
.palette { border-right: 1px solid #d8dade; border-left: 1px solid #d5d6d9; }
.grip { display: flex; align-items: center; justify-content: space-between; height: 9px; padding: 0 5px 0 17px; color: #999; line-height: 8px; font-weight: bold; }
.grip .gear { width: 7px; height: 7px; }
.tools { display: grid; grid-template-columns: repeat(2, 19px); grid-template-rows: repeat(19, 1fr); height: 355px; }

.view { display: flex; flex-direction: column; min-width: 0; }
.viewport { flex: 1; position: relative; overflow: hidden; background: #9ba2aa; }
.scene { width: 100%; height: 100%; position: absolute; inset: 0; }
.axes text { font: 9px "Liberation Sans", sans-serif; fill: #60656b; }
.view-title { position: absolute; left: 0; top: 0; height: 10px; padding: 0 2px 0 3px; background: #6aa7fb; color: #173a73; font-size: 9px; line-height: 10px; }
.view-title span { margin-left: 1px; border-left: 1px solid #3a63a6; font-size: 7px; }
.view-tabs { display: flex; height: 13px; align-items: center; background: #dcdee2; color: #777; }
.view-tabs button { height: 13px; padding: 0 5px 0 6px; }
.view-tabs .on { padding: 0 6px; background: #e9ebee; color: #555; }
.view-tabs svg { width: 7px; height: 7px; }

.panels { display: flex; flex-direction: column; padding: 0 3px 0 2px; border-left: 1px solid #c6c8cc; min-height: 0; }
.panels section { display: flex; flex-direction: column; }
.panel-head { height: 10px; color: #777; line-height: 9px; border-bottom: 1px solid #dcdee1; }
.layers { height: 213px; }
.layer-tools { display: grid; grid-template-columns: repeat(10, 1fr); grid-auto-rows: 15px; padding-top: 4px; }
.layer-tools button { display: grid; place-items: center; }
.layer-tools svg { width: 12px; height: 12px; }
.search { display: flex; align-items: center; height: 12px; margin: 4px 0; padding-left: 3px; gap: 1px; background: #fff; border: 1px solid #dcdde0; border-radius: 6px; }
.search svg { width: 8px; height: 8px; }
.search input { flex: 1; min-width: 0; border: 0; padding: 0; height: 10px; background: none; }
.search input::placeholder { color: #888; opacity: 1; }
.layer-list { flex: 1; display: flex; flex-direction: column; background: #fff; color: #333; }
.layer-list table { width: 100%; table-layout: fixed; border-collapse: collapse; }
.c-name { width: 53px; }
.c-ic { width: 13px; }
.layer-list th { height: 15px; padding: 0 3px; text-align: left; font-weight: normal; font-family: "Noto Sans", sans-serif; border-right: 1px solid #e4e5e7; }
.layer-list th:last-child { border-right: 0; }
.layer-list td { height: 13px; padding: 0 1px; }
.layer-list td:first-child { padding-left: 10px; }
.layer-list td svg { width: 10px; height: 10px; margin: auto; }
.sel { background: #6fb8fb; }
.cur { font-weight: bold; color: #111; }
.swatch { display: block; width: 10px; height: 10px; background: #000; }
.dot { display: block; width: 9px; height: 9px; border: 1px solid #888; border-radius: 50%; background: #fff; }
.thumb { width: 53px; height: 6px; margin: auto 0 2px 5px; border-radius: 3px; background: #c4c5c7; }
.filters .panel-head { height: 11px; line-height: 11px; }
.checks { display: grid; grid-template-rows: repeat(14, 1fr) 28px; height: 165px; padding: 3px 0 0 2px; color: #7b7e82; line-height: 9px; }
.checks label { display: flex; align-items: center; gap: 3px; }
.checks .dark { color: #555; }
.checks input { appearance: none; margin: 0; width: 8px; height: 8px; display: grid; place-items: center; background: #f2f3f5; color: #666; }
.checks input:checked::before { content: ""; width: 8px; height: 8px; background: currentColor; clip-path: polygon(5% 50%, 22% 42%, 38% 66%, 82% 5%, 98% 15%, 42% 95%); }
.checks .dark input { background: #fff; color: #111; }

.rail { display: flex; flex-direction: column; background: #d6d8dd; }
.rail-top { height: 213px; display: flex; flex-direction: column; }
.rail button { display: grid; place-items: center; height: 24px; width: 100%; }
.rail button svg { width: 12px; height: 12px; }
.rail .on { background: #e9eaee; }
.rail .gear { margin: 2px 0 0 3px; width: 7px; height: 7px; }
.rail .chev { height: 9px; margin-top: 4px; background: #eceef1; font-size: 9px; line-height: 8px; }
.rail-bottom { display: flex; flex-direction: column; }
.rail-bottom .gear { margin-bottom: 2px; }

.status { display: flex; justify-content: space-between; height: 13px; align-items: center; color: #666; background: #e7e9ed; }
.coords { display: flex; align-items: center; gap: 4px; padding-left: 99px; }
.cx { width: 20px; }
.cy { width: 73px; }
.cz { width: 43px; }
.units { width: 51px; }
.modes { display: flex; align-items: center; padding-right: 5px; }
.modes button { height: 12px; padding: 0 7px; }
.modes .on { padding: 0 4px 0 5px; margin-right: 2px; background: #d3d9ea; color: #2d3345; font-weight: bold; }
.modes .off { padding: 0 7px 0 6px; color: #8f9296; }
.lock { width: 8px; height: 8px; margin: 0 0 0 3px; }
.side { width: 7px; height: 7px; margin-left: 21px; }

.mini { position: absolute; left: 5px; bottom: 0; width: 96px; height: 17px; display: flex; justify-content: space-around; align-items: center; background: #fbfbfc; border-radius: 4px; box-shadow: 0 0 3px #9a9ca0; }
.mini svg { width: 8px; height: 8px; }
.callout { position: absolute; left: 0; top: 0; width: 212px; height: 156px; pointer-events: none; }
```
